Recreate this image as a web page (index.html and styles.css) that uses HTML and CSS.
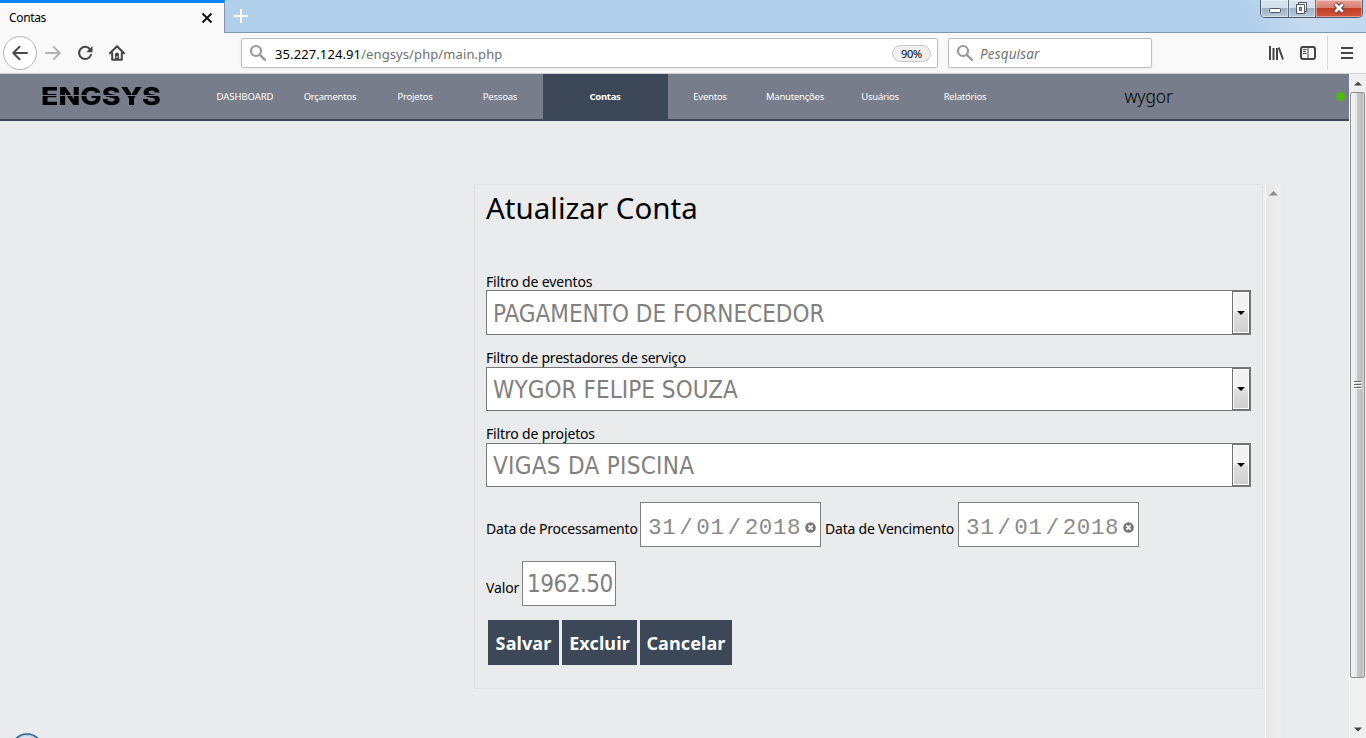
FILE: index.html
```html
<!DOCTYPE html>
<html lang="pt-BR">
<head>
<meta charset="utf-8">
<title>Contas</title>
<link rel="stylesheet" href="styles.css">
</head>
<body>
<div class="window">
  <div class="tabstrip">
    <div class="tab"><span class="tab-title">Contas</span>
      <svg class="tab-close" width="12" height="12" viewBox="0 0 12 12"><path d="M1.500 1.500l9 9M10.500 1.500l-9 9" stroke="#0c0c0d" stroke-width="1.900"/></svg>
    </div>
    <svg class="newtab" width="16" height="16" viewBox="0 0 16 16"><path d="M8 1v14M1 8h14" stroke="#fff" stroke-width="2"/></svg>
    <div class="caption">
      <div class="cap-btn cap-min"><svg width="14" height="17"><rect x="1.500" y="8.500" width="11" height="4" rx="1" fill="#fff" stroke="#50535f"/></svg></div>
      <div class="cap-btn cap-max"><svg width="14" height="17"><path d="M3.500 2.500h8v9h-8z" fill="#fff" stroke="#50535f"/><path d="M1.500 4.500h8v9h-8z" fill="#fff" stroke="#50535f"/><path d="M4.500 7.500h2v3h-2z" fill="#9fb1c5" stroke="#50535f"/></svg></div>
      <div class="cap-btn cap-close"><svg width="14" height="17"><path d="M3 4l8 8M11 4l-8 8" stroke="#554048" stroke-width="4.600"/><path d="M3.300 4.300l7.400 7.400M10.700 4.300l-7.400 7.400" stroke="#fff" stroke-width="2.700"/></svg></div>
    </div>
  </div>
  <div class="toolbar">
    <div class="nav-buttons">
      <div class="back"><svg width="16" height="16" viewBox="0 0 16 16"><path d="M15 8H1.700M7.500 1.800L1.300 8l6.200 6.200" fill="none" stroke="#4a4a4b" stroke-width="2" stroke-linecap="round" stroke-linejoin="round"/></svg></div>
      <svg width="16" height="16" viewBox="0 0 16 16"><path d="M1 8h13.300M8.700 1.900L14.800 8l-6.100 6.100" fill="none" stroke="#b2b2b3" stroke-width="2" stroke-linecap="round" stroke-linejoin="round"/></svg>
      <svg width="16" height="16" viewBox="0 0 16 16"><path d="M13.300 4.600A6.100 6.100 0 1 0 14 9.800" fill="none" stroke="#454546" stroke-width="2" stroke-linecap="round"/><path d="M15.500 1v6.300H9.200z" fill="#454546"/></svg>
      <svg width="16" height="16" viewBox="0 0 16 16"><path d="M1 8.300L8 1.300l7 7M3.200 8v6.800h9.600V8" fill="none" stroke="#454546" stroke-width="2" stroke-linecap="round" stroke-linejoin="round"/><path d="M6 14V9.500a2 2 0 0 1 4 0V14" fill="#454546"/><path d="M8 11v2" stroke="#f9f9fa"/></svg>
    </div>
    <div class="field url">
      <svg width="18" height="18" viewBox="0 0 18 18"><circle cx="7" cy="7" r="5" fill="none" stroke="#999" stroke-width="2.200"/><path d="M10.800 10.800l5.200 5" stroke="#999" stroke-width="2.400" stroke-linecap="round"/></svg>
      <span class="address">35.227.124.91<i>/engsys/php/main.php</i></span>
      <span class="zoom">90%</span>
    </div>
    <div class="field search">
      <svg width="18" height="18" viewBox="0 0 18 18"><circle cx="7" cy="7" r="5" fill="none" stroke="#999" stroke-width="2.200"/><path d="M10.800 10.800l5.200 5" stroke="#999" stroke-width="2.400" stroke-linecap="round"/></svg>
      <span class="placeholder">Pesquisar</span>
    </div>
    <div class="tools">
      <svg width="16" height="16" viewBox="0 0 16 16"><path d="M2 1v14M5.500 3v12M9 3v12" stroke="#454546" stroke-width="2"/><path d="M10.800 2.500l4.200 12" stroke="#454546" stroke-width="2"/></svg>
      <svg width="16" height="16" viewBox="0 0 16 16"><rect x="1" y="2" width="14" height="12" rx="2" fill="none" stroke="#454546" stroke-width="2"/><path d="M8 2v12M3 4.500h3.500M3 6.500h3M3 8.500h3.500" stroke="#454546" stroke-width="1"/></svg>
      <div class="menu"><svg width="12" height="14" viewBox="0 0 12 14"><path d="M0 2h12M0 7h12M0 12h12" stroke="#454546" stroke-width="2"/></svg></div>
    </div>
  </div>
  <div class="viewport">
    <div class="page">
      <header class="header">
        <div class="logo"><span>ENGSYS</span></div>
        <nav class="nav">
          <a class="t-dash">DASHBOARD</a><a>Orçamentos</a><a>Projetos</a><a>Pessoas</a><a class="active">Contas</a><a>Eventos</a><a>Manutenções</a><a>Usuários</a><a>Relatórios</a>
        </nav>
        <span class="user">wygor</span>
        <span class="status"></span>
      </header>
      <main class="main">
        <section class="panel">
          <h1>Atualizar Conta</h1>
          <label class="l1">Filtro de eventos</label>
          <div class="select tall"><span class="s1">PAGAMENTO DE FORNECEDOR</span><b class="drop"></b></div>
          <label class="l2">Filtro de prestadores de serviço</label>
          <div class="select"><span class="s2">WYGOR FELIPE SOUZA</span><b class="drop"></b></div>
          <label class="l3">Filtro de projetos</label>
          <div class="select"><span class="s3">VIGAS DA PISCINA</span><b class="drop"></b></div>
          <div class="row dates">
            <label class="l4">Data de Processamento</label>
            <div class="date"><span>31</span><span class="sl">/</span><span>01</span><span class="sl">/</span><span>2018</span><svg width="11" height="11" viewBox="0 0 11 11"><circle cx="5.500" cy="5.500" r="5.300" fill="#777"/><path d="M3.400 3.400l4.200 4.200M7.600 3.400L3.400 7.600" stroke="#fff" stroke-width="1.700"/></svg></div>
            <label class="l5">Data de Vencimento</label>
            <div class="date"><span>31</span><span class="sl">/</span><span>01</span><span class="sl">/</span><span>2018</span><svg width="11" height="11" viewBox="0 0 11 11"><circle cx="5.500" cy="5.500" r="5.300" fill="#777"/><path d="M3.400 3.400l4.200 4.200M7.600 3.400L3.400 7.600" stroke="#fff" stroke-width="1.700"/></svg></div>
          </div>
          <div class="row value"><label class="l6">Valor</label><div class="amount">1962.50</div></div>
          <div class="row actions"><button class="b1">Salvar</button><button class="b2">Excluir</button><button class="b3">Cancelar</button></div>
        </section>
        <div class="inner-scroll"><svg width="9" height="5" viewBox="0 0 9 5"><path d="M0 4.500L4.500 0 9 4.500z" fill="#8e8e8e"/></svg></div>
      </main>
      <svg class="orb" width="34" height="6" viewBox="0 0 34 6"><circle cx="17" cy="17" r="16" fill="#b9cbdc" stroke="#2c6290" stroke-width="1.500"/><circle cx="17" cy="19" r="15" fill="none" stroke="#e3edf6" stroke-width="1.500"/></svg>
    </div>
    <div class="scrollbar">
      <div class="arrow"><svg width="8" height="5" viewBox="0 0 8 5"><path d="M0 4.500L4 .5l4 4z" fill="#444"/></svg></div>
      <div class="thumb"><svg width="8" height="10" viewBox="0 0 8 10"><path d="M0 1.500h7M0 4.500h7M0 7.500h7" stroke="#666"/><path d="M0 2.500h8M0 5.500h8M0 8.500h8" stroke="#fff"/></svg></div>
      <div class="arrow bottom"><svg width="8" height="5" viewBox="0 0 8 5"><path d="M0 .5L4 4.500l4-4z" fill="#444"/></svg></div>
    </div>
  </div>
</div>
</body>
</html>
```
FILE: styles.css
```css
* { box-sizing: border-box; }
body { margin: 0; overflow: hidden; font-family: "Noto Sans", sans-serif; color: #000; }
svg { display: block; flex: none; }
.window { width: 1366px; height: 738px; display: flex; flex-direction: column; overflow: hidden; }

.tabstrip { height: 33px; flex: none; display: flex; border-bottom: 1px solid #7f96ae; background: linear-gradient(62deg, #b2d0eb 0 91%, #c6dbf0 95%, #bfd7ee 100%); }
.tab { width: 225px; height: 33px; border-top: 3px solid #0a84ff; border-right: 1px solid #7f96ae; background: #f9f9fa; display: flex; align-items: center; justify-content: space-between; padding: 0 11px 2px 9px; }
.tab-close { position: relative; top: 1px; }
.tab-title { font-size: 12px; letter-spacing: -.35px; }
.newtab { margin: 8px 0 0 8px; }
.caption { margin-left: auto; margin-right: 3px; height: 18px; display: flex; border: 1px solid #4f5c6c; border-top: 0; border-radius: 0 0 5px 5px; overflow: hidden; }
.cap-btn { display: flex; justify-content: center; height: 17px; background: linear-gradient(#d4e0eb 0 45%, #9fb2c6 50%, #b9cadb); border-right: 1px solid #5e6d7e; box-shadow: inset 0 0 0 1px rgba(255,255,255,.4); }
.cap-min { width: 28px; }
.cap-max { width: 27px; }
.cap-close { width: 46px; border-right: 0; background: linear-gradient(#e6a396 0, #d8806f 45%, #c13c24 50%, #d0573e); }

.toolbar { height: 41px; flex: none; display: flex; align-items: center; background: #f9f9fa; border-bottom: 1px solid #d2d2d4; }
.nav-buttons { width: 241px; display: flex; align-items: center; gap: 16px; padding-left: 3px; }
.back { width: 34px; height: 34px; margin-right: -8px; border: 1px solid #b3b3b4; border-radius: 50%; background: #fff; display: grid; place-items: center; }
.field { height: 30px; background: #fff; border: 1px solid #bebebf; border-radius: 2px; box-shadow: 0 1px 3px rgba(0,0,0,.06); display: flex; align-items: center; padding-left: 7px; }
.url { width: 697px; }
.search { width: 204px; margin-left: 10px; }
.address { margin-left: 8px; padding-top: 1px; font-size: 13px; letter-spacing: .1px; white-space: nowrap; }
.address i { font-style: normal; color: #707070; }
.zoom { margin-left: auto; margin-right: 6px; width: 39px; height: 17px; border: 1px solid #c6c6c6; border-radius: 9px; background: #f0f0f1; font-size: 11px; line-height: 16px; text-align: center; letter-spacing: -.2px; }
.placeholder { margin-left: 6px; padding-top: 1px; font-size: 13.500px; font-style: italic; letter-spacing: .15px; color: #737373; }
.tools { margin-left: auto; display: flex; align-items: center; gap: 16px; }
.menu { height: 34px; width: 39px; margin-left: -5px; border-left: 1px solid #d7d7d8; display: flex; align-items: center; padding-left: 13px; }

.viewport { flex: 1; min-height: 0; display: flex; }
.page { width: 1349px; background: #eaebed; display: flex; flex-direction: column; }
.header { height: 47px; flex: none; background: #777d8a; border-bottom: 2px solid #3c4858; display: flex; align-items: center; }
.logo { width: 202.500px; padding-left: 41px; }
.logo span { display: block; width: max-content; font: 800 24px/30px Inter, sans-serif; transform-origin: 0 50%; transform: scaleX(1.19); background: linear-gradient(#000 0 13px, transparent 13px 14px, #000 14px); -webkit-background-clip: text; background-clip: text; color: transparent; }
.nav { display: flex; height: 45px; }
.nav a { width: 85px; color: #fff; font-size: 9.500px; line-height: 45px; text-align: center; letter-spacing: -.22px; }
.nav .t-dash { letter-spacing: -.05px; }
.nav .active { width: 125px; background: #3c4858; font-weight: 700; letter-spacing: -.3px; }
.user { margin-left: 117px; width: 80px; font: 17.500px/45px "Noto Sans", sans-serif; font-weight: 300; letter-spacing: -.1px; }
.status { margin-left: auto; margin-right: 4px; width: 9px; height: 9px; border-radius: 50%; background: #4cbb17; }

.main { flex: 1; min-height: 0; display: flex; align-items: flex-start; padding: 63px 0 0 474px; }
.panel { width: 789px; height: 505px; border: 1px solid #e1e3e5; padding: 3px 11px 0; display: flex; flex-direction: column; }
h1 { margin: 0 0 46px; font-size: 29.500px; line-height: 40px; font-weight: 400; white-space: nowrap; }
label { font-size: 14px; line-height: 16px; letter-spacing: -.15px; white-space: nowrap; }
.l2 { letter-spacing: -.19px; }
.select { width: 765px; height: 44px; flex: none; border: 1px solid #777; background: #fff; color: #808080; display: flex; align-items: center; justify-content: space-between; padding-left: 6px; margin: 1px 0 15px; font: 24px "DejaVu Sans Condensed", "DejaVu Sans", sans-serif; }
.select span { padding-top: 2px; white-space: nowrap; }
.select .s3 { letter-spacing: .3px; }
.select .s2 { letter-spacing: .06px; }
.tall { height: 45px; margin-top: 0; }
.drop { width: 18px; height: 100%; border: 1px solid #707070; box-shadow: inset 0 0 0 1px #fff; background: linear-gradient(#f2f2f2 0 48%, #dfdfdf 52%, #cfcfcf); display: grid; place-items: center; }
.drop::after { content: ""; border: 4px solid transparent; border-top-color: #000; border-bottom: 0; }
.row { display: flex; }
.dates { height: 45px; }
.row label { padding-top: 19px; }
.date { width: 181px; height: 45px; border: 1px solid #808080; background: #fff; color: #8a8a8a; display: flex; align-items: center; padding: 6px 4px 0 7px; font: 22.500px "Liberation Mono", monospace; letter-spacing: .65px; }
.date .sl { width: 20px; text-align: center; }
.date svg { margin-left: auto; }
.l4 { width: 154px; letter-spacing: -.22px; }
.l5 { width: 137px; padding-left: 4px; letter-spacing: -.22px; }
.value { margin-top: 14px; height: 45px; }
.l6 { width: 36px; }
.amount { width: 94px; height: 45px; border: 1px solid #808080; background: #fff; color: #808080; padding-left: 4px; font: 24px/45px "DejaVu Sans Condensed", "DejaVu Sans", sans-serif; letter-spacing: -.5px; white-space: nowrap; }
.actions { margin-top: 14px; padding-left: 2px; gap: 3px; }
button { height: 45px; padding: 0; border: 0; background: #3c4858; color: #fff; font: 700 18px "Noto Sans", sans-serif; letter-spacing: .1px; white-space: nowrap; }
.b1 { width: 71px; }
.b2 { width: 75px; }
.b3 { width: 92px; }
.inner-scroll { margin-left: 2px; width: 16px; height: 554px; border-left: 1px solid #fafafa; background: linear-gradient(90deg, #e8e8e9, #efefef); display: flex; justify-content: center; padding-top: 7px; }
.orb { position: absolute; left: 10px; bottom: -1px; }

.scrollbar { width: 17px; display: flex; flex-direction: column; background: #f0f0f0; border-left: 1px solid #fafafa; }
.arrow { height: 18px; display: grid; place-items: center; }
.thumb { height: 586px; width: 15px; border: 1px solid #8e8e8e; border-radius: 2px; background: linear-gradient(90deg, #f7f7f7, #e6e6e8 45%, #c8c8ca 50%, #bdbdc0 85%, #dedede); display: grid; place-items: center; }
.bottom { margin-top: auto; }
```
